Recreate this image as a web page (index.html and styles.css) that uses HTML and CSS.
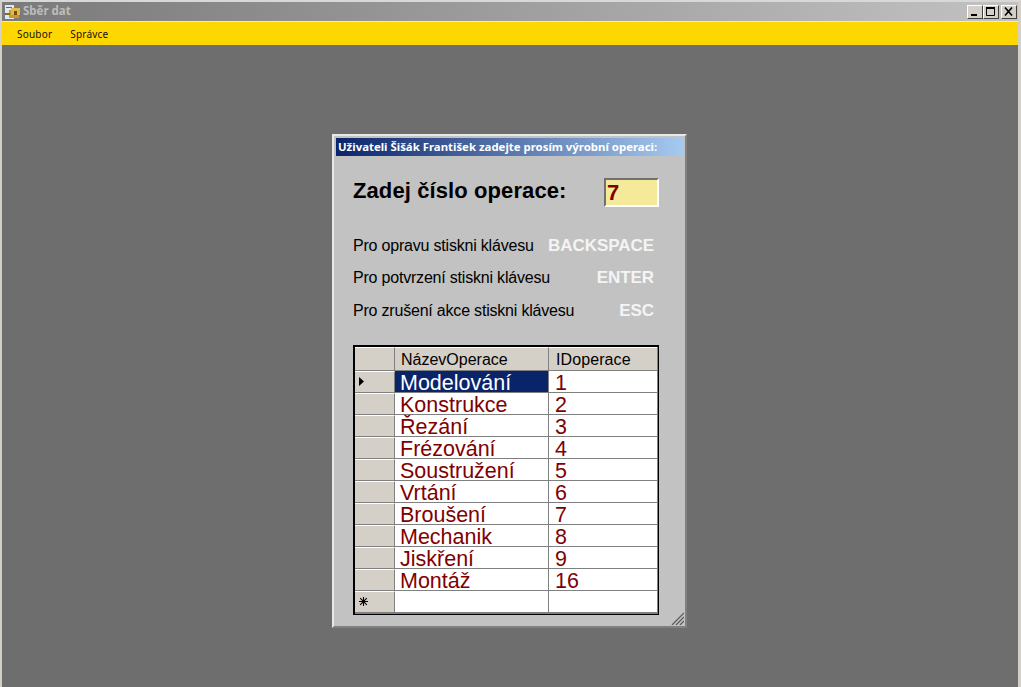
FILE: index.html
```html
<!DOCTYPE html>
<html>
<head>
	<title>Sběr dat</title>
	<link rel="stylesheet" href="styles.css">
</head>
<body>
<div class="app">
	<div class="titleBar">
		<svg class="appIcon" width="16" height="16" viewBox="0 0 16 16">
			<rect x="0" y="1" width="9" height="14" fill="#dfe8f0"/>
			<rect x="1" y="3" width="6" height="1" fill="#5a6f85"/>
			<rect x="4" y="6" width="10" height="8" fill="#c99a2e"/>
			<rect x="6" y="4" width="9" height="7" fill="#e3b948"/>
			<rect x="9" y="7" width="3" height="4" fill="#6b4e12"/>
			<rect x="0" y="9" width="5" height="2" fill="#8a6a1c"/>
		</svg>
		<span class="appName">Sběr dat</span>
		<div class="winButtons">
			<div class="winBtn"><svg width="10" height="9" viewBox="0 0 10 9"><rect x="1" y="7" width="6" height="2" fill="#000"/></svg></div>
			<div class="winBtn"><svg width="10" height="9" viewBox="0 0 10 9"><path d="M0.5 1.5h8v7h-8z" fill="none" stroke="#000"/><rect y="0" width="9" height="2" fill="#000"/></svg></div>
			<div class="winBtn closeBtn"><svg width="10" height="9" viewBox="0 0 10 9"><path d="M1 0.5l7 8M8 0.5l-7 8" fill="none" stroke="#000" stroke-width="1.6"/></svg></div>
		</div>
	</div>
	<div class="menuBar">
		<span class="menuItem">Soubor</span>
		<span class="menuItem">Správce</span>
	</div>
	<div class="workspace">
		<div class="dialog">
			<div class="dialogTitle">Uživateli Šišák František zadejte prosím výrobní operaci:</div>
			<div class="promptRow">
				<span class="promptLabel">Zadej číslo operace:</span>
				<div class="promptInput">7</div>
			</div>
			<div class="hintRow"><span>Pro opravu stiskni klávesu</span><span class="hintKey">BACKSPACE</span></div>
			<div class="hintRow"><span>Pro potvrzení stiskni klávesu</span><span class="hintKey">ENTER</span></div>
			<div class="hintRow"><span>Pro zrušení akce stiskni klávesu</span><span class="hintKey">ESC</span></div>
			<div class="grid">
				<div class="rowHead headCell"></div><div class="cell headCell">NázevOperace</div><div class="cell headCell lastCol">IDoperace</div>

				<div class="rowHead"><svg width="5" height="9" viewBox="0 0 5 9"><path d="M0 0l5 4.5l-5 4.5z" fill="#000"/></svg></div><div class="cell selected">Modelování</div><div class="cell lastCol">1</div>
				<div class="rowHead"></div><div class="cell">Konstrukce</div><div class="cell lastCol">2</div>
				<div class="rowHead"></div><div class="cell">Řezání</div><div class="cell lastCol">3</div>
				<div class="rowHead"></div><div class="cell">Frézování</div><div class="cell lastCol">4</div>
				<div class="rowHead"></div><div class="cell">Soustružení</div><div class="cell lastCol">5</div>
				<div class="rowHead"></div><div class="cell">Vrtání</div><div class="cell lastCol">6</div>
				<div class="rowHead"></div><div class="cell">Broušení</div><div class="cell lastCol">7</div>
				<div class="rowHead"></div><div class="cell">Mechanik</div><div class="cell lastCol">8</div>
				<div class="rowHead"></div><div class="cell">Jiskření</div><div class="cell lastCol">9</div>
				<div class="rowHead"></div><div class="cell">Montáž</div><div class="cell lastCol">16</div>
				<div class="rowHead newRow"><svg width="9" height="9" viewBox="0 0 9 9"><path d="M4.5 0v9M0 4.5h9M1.2 1.2l6.6 6.6M7.8 1.2l-6.6 6.6" fill="none" stroke="#000" stroke-width="1.1"/></svg></div><div class="cell newRow"></div><div class="cell newRow lastCol"></div>
			</div>
			<svg class="gripper" width="13" height="13" viewBox="0 0 13 13">
				<path d="M1 13L13 1M5 13L13 5M9 13L13 9" fill="none" stroke="#555" stroke-width="1.2"/>
			</svg>
		</div>
	</div>
</div>
</body>
</html>
```

FILE: styles.css
```css
html, body {
	margin: 0;
	height: 100%;
	overflow: hidden;
}

.app {
	height: 687px;
	display: flex;
	flex-direction: column;
	background-color: #c0c0c0;
	border-top: 2px solid #d8d8d8;
	border-left: 2px solid #d4d0c8;
	border-right: 3px solid #d4d0c8;
	box-sizing: border-box;
}

.titleBar {
	height: 19px;
	display: flex;
	align-items: center;
	flex-shrink: 0;
	padding-left: 3px;
	background: linear-gradient(to right, #7a7a7a, #c2c2c2);
	font-family: "Noto Sans", sans-serif;
	font-size: 11.5px;
	font-weight: bold;
	color: #bcbcbc;
}

.appIcon {
	margin-right: 1px;
}

.appName {
	margin-left: 1px;
	margin-bottom: 2px;
}

.winButtons {
	margin-left: auto;
	display: flex;
	margin-right: 1px;
}

.winBtn {
	width: 16px;
	height: 14px;
	box-sizing: border-box;
	display: flex;
	align-items: center;
	justify-content: center;
	background-color: #d4d0c8;
	border: 1px solid;
	border-color: #fff #404040 #404040 #fff;
}

.closeBtn {
	margin-left: 2px;
}

.menuBar {
	height: 24px;
	flex-shrink: 0;
	display: flex;
	align-items: center;
	padding-left: 15px;
	gap: 18px;
	background-color: #ffd700;
	border-top: 1px solid #e8e8e8;
	box-sizing: border-box;
	font-family: "Noto Sans", sans-serif;
	font-size: 10px;
	letter-spacing: 0.2px;
	color: #111;
}

.workspace {
	flex: 1;
	background-color: #6e6e6e;
	padding: 89px 0 0 330px;
}

.dialog {
	position: relative;
	width: 355px;
	height: 494px;
	box-sizing: border-box;
	background-color: #c2c2c2;
	border: 2px solid;
	border-color: #e8e8e8 #808080 #808080 #e8e8e8;
	padding: 2px 1px 0 2px;
	font-family: "Liberation Sans", sans-serif;
}

.dialogTitle {
	height: 18px;
	line-height: 18px;
	padding-left: 2px;
	background: linear-gradient(to right, #0a246a, #a6caf0);
	font-family: "Noto Sans", sans-serif;
	font-size: 11.4px;
	font-weight: bold;
	color: #fff;
	white-space: nowrap;
}

.promptRow {
	display: flex;
	align-items: center;
	height: 30px;
	margin: 20px 0 23.7px 17px;
}

.promptLabel {
	font-size: 22px;
	font-weight: bold;
	letter-spacing: 0.1px;
	color: #000;
	width: 251px;
}

.promptInput {
	width: 55px;
	height: 29px;
	margin-top: 2px;
	box-sizing: border-box;
	background-color: #f5e99a;
	border: 2px solid;
	border-color: #707070 #fff #fff #707070;
	padding-left: 1px;
	font-size: 22px;
	font-weight: bold;
	line-height: 25px;
	color: #800000;
}

.hintRow {
	display: flex;
	justify-content: space-between;
	align-items: center;
	height: 32.5px;
	width: 301px;
	margin-left: 17px;
	font-size: 16px;
	letter-spacing: -0.2px;
	color: #000;
}

.hintKey {
	font-weight: bold;
	font-size: 17px;
	letter-spacing: -0.05px;
	color: #f4f4f4;
}

.grid {
	display: grid;
	grid-template-columns: 40px 154px 108px;
	grid-auto-rows: 22px;
	grid-template-rows: 24px;
	width: 306px;
	box-sizing: border-box;
	margin-top: 17.8px;
	margin-left: 17px;
	border: solid #000;
	border-width: 2px 1px 1px 2px;
	padding: 0 1px 1px 0;
	background-color: #808080;
	font-size: 21.5px;
}

.rowHead {
	display: flex;
	align-items: center;
	padding-left: 4px;
	box-sizing: border-box;
	background-color: #d4d0c8;
	border-top: 1px solid #fff;
	border-bottom: 1px solid #808080;
	border-right: 1px solid #808080;
}

.cell {
	padding: 3px 0 0 5px;
	box-sizing: border-box;
	line-height: 18px;
	background-color: #fff;
	color: #800000;
	border-right: 1px solid #808080;
	border-bottom: 1px solid #808080;
	white-space: nowrap;
}

.lastCol {
	padding-left: 6px;
	border-right: 0;
}

.headCell {
	padding: 1px 0 0 6px;
	background-color: #d4d0c8;
	color: #000;
	font-size: 16px;
	line-height: 21px;
	border-top: 1px solid #fff;
}

.headCell.lastCol {
	padding-left: 7px;
	letter-spacing: 0.1px;
}

.selected {
	background-color: #0a246a;
	color: #fff;
}

.gripper {
	position: absolute;
	right: 1px;
	bottom: 1px;
}
```
